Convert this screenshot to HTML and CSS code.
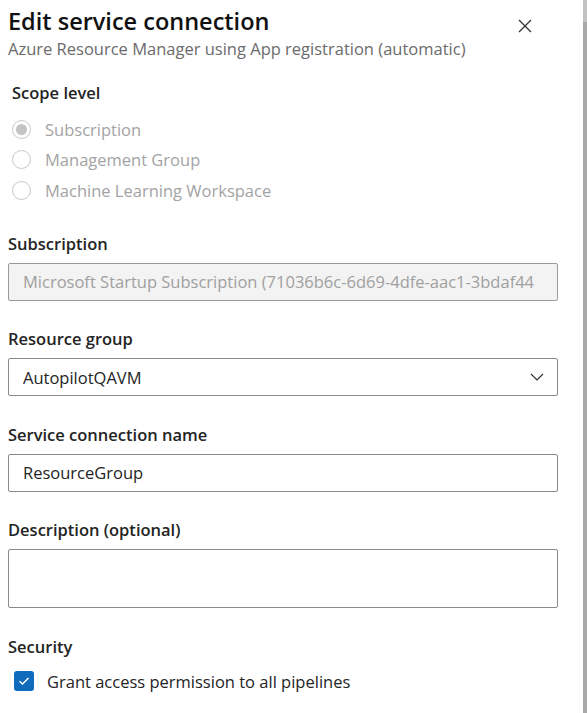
FILE: index.html
```html
<!DOCTYPE html>
<html lang="en">
<head>
    <meta charset="UTF-8">
    <title>Edit service connection</title>
    <meta name="viewport" content="width=device-width, initial-scale=1.0">
    <link rel="stylesheet" href="styles.css">
</head>
<body>
    <div class="panel">
        <div class="content">
            <div class="header">
                <div class="titles">
                    <h1 class="title">Edit service connection</h1>
                    <div class="subtitle">Azure Resource Manager using App registration (automatic)</div>
                </div>
                <button class="close" aria-label="Close">
                    <svg width="14" height="14" viewBox="0 0 14 14">
                        <path d="M1 1 L13 13 M13 1 L1 13" stroke="#323130" stroke-width="1.3" fill="none"/>
                    </svg>
                </button>
            </div>

            <div class="scope">
                <div class="label scope-label">Scope level</div>
                <label class="radio checked"><span class="dot"></span>Subscription</label>
                <label class="radio"><span class="dot"></span>Management Group</label>
                <label class="radio"><span class="dot"></span>Machine Learning Workspace</label>
            </div>

            <div class="field">
                <div class="label">Subscription</div>
                <div class="box disabled"><span class="value">Microsoft Startup Subscription (71036b6c-6d69-4dfe-aac1-3bdaf44</span></div>
            </div>

            <div class="field">
                <div class="label">Resource group</div>
                <div class="box select">
                    <span class="value">AutopilotQAVM</span>
                    <svg width="14" height="8" viewBox="0 0 14 8">
                        <path d="M1 1 L7 7 L13 1" stroke="#323130" stroke-width="1.2" fill="none"/>
                    </svg>
                </div>
            </div>

            <div class="field">
                <div class="label">Service connection name</div>
                <div class="box"><span class="value">ResourceGroup</span></div>
            </div>

            <div class="field">
                <div class="label">Description (optional)</div>
                <div class="box textarea"></div>
            </div>

            <div class="field">
                <div class="label">Security</div>
                <label class="check">
                    <span class="tick">
                        <svg width="12" height="10" viewBox="0 0 12 10">
                            <path d="M1.5 5.2 L4.5 8 L10.5 2" stroke="#fff" stroke-width="1.5" fill="none"/>
                        </svg>
                    </span>
                    Grant access permission to all pipelines
                </label>
            </div>
        </div>
        <div class="scrollbar"><div class="thumb"></div></div>
    </div>
</body>
</html>
```

FILE: styles.css
```css
body {
    margin: 0;
    background: #fff;
    font-family: "Segoe UI", "Open Sans", "Noto Sans", sans-serif;
    color: #242424;
}
.panel {
    display: flex;
    height: 713px;
    overflow: hidden;
}
.content {
    flex: 1;
    min-width: 0;
    padding: 0 25px 0 8px;
}
.scrollbar {
    width: 4px;
    flex-shrink: 0;
    background: #a8a8a8;
}
.thumb {
    height: 22px;
    background: #c2c2c2;
}
.header {
    display: flex;
    justify-content: space-between;
    align-items: flex-start;
}
.title {
    margin: 6px 0 0;
    font-size: 23.5px;
    font-weight: 600;
    color: #111;
    line-height: 30px;
}
.subtitle {
    font-size: 16.5px;
    color: #6b6b6b;
    line-height: 22px;
    margin-top: 2px;
}
.close {
    border: none;
    background: none;
    padding: 0;
    margin: 19px 26px 0 0;
    width: 14px;
    height: 14px;
    display: flex;
    flex-shrink: 0;
}
.scope {
    padding: 0 0 0 4px;
    margin-top: 22px;
}
.label {
    font-size: 16.5px;
    font-weight: 600;
    line-height: 22px;
    color: #242424;
}
.scope-label {
    margin-bottom: 10px;
}
.radio {
    display: flex;
    align-items: center;
    height: 30.5px;
    font-size: 16.5px;
    color: #a3a3a3;
}
.dot {
    width: 19px;
    height: 19px;
    border: 1px solid #c8c8c8;
    border-radius: 50%;
    box-sizing: border-box;
    margin-right: 14px;
    display: flex;
    align-items: center;
    justify-content: center;
}
.radio.checked .dot::after {
    content: "";
    width: 11px;
    height: 11px;
    border-radius: 50%;
    background: #c4c4c4;
}
.field {
    margin-top: 27.5px;
}
.scope + .field {
    margin-top: 27px;
}
.field .label {
    margin-bottom: 8px;
}
.box {
    height: 38px;
    box-sizing: border-box;
    border: 1px solid #8a8a8a;
    border-radius: 2px;
    padding: 0 14px;
    display: flex;
    align-items: center;
    overflow: hidden;
    font-size: 16.5px;
    color: #242424;
}
.value {
    min-width: 0;
    white-space: nowrap;
    overflow: hidden;
}
.box.disabled {
    background: #f3f3f3;
    color: #a0a0a0;
    border-color: #9a9a9a;
}
.box.select {
    justify-content: space-between;
}
.box.select svg {
    flex-shrink: 0;
    margin-right: -1px;
}
.box.textarea {
    height: 59px;
}
.check {
    display: flex;
    align-items: center;
    font-size: 16.5px;
    color: #242424;
    margin-left: 6px;
    margin-top: 12px;
}
.tick {
    width: 20px;
    height: 20px;
    border-radius: 3px;
    background: #0f6cbd;
    display: flex;
    align-items: center;
    justify-content: center;
    margin-right: 13px;
}
```
